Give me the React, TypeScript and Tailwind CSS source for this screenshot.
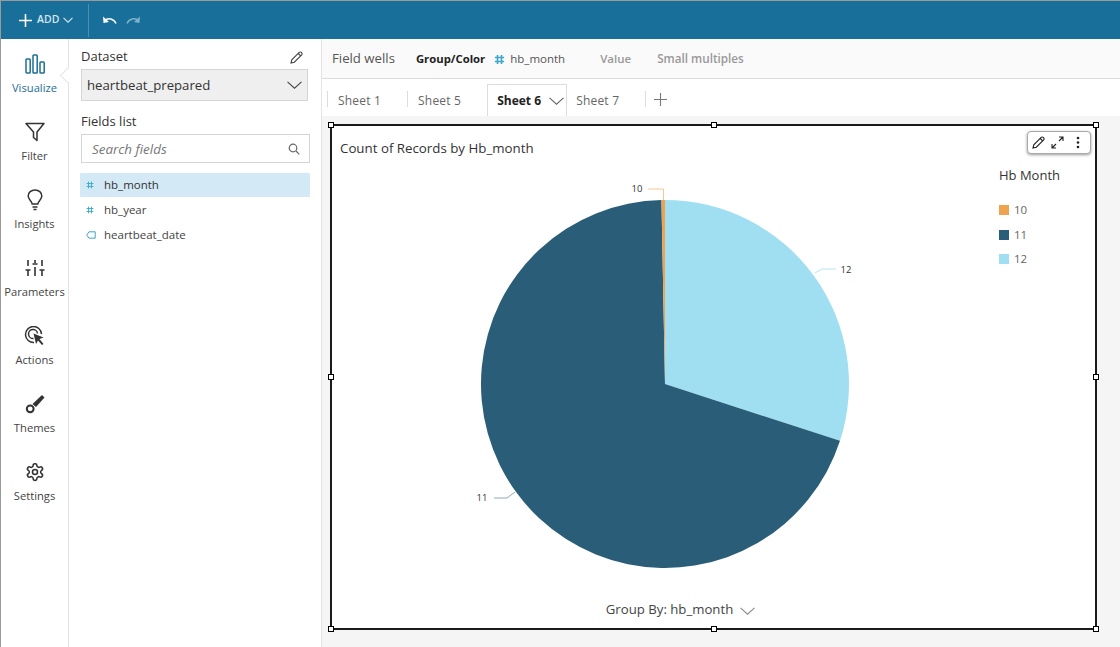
import React from "react";

const font = "font-['Open_Sans','Noto_Sans',sans-serif]";

function Chevron({ className = "", w = 14, h = 8, color = "#444" }: { className?: string; w?: number; h?: number; color?: string }) {
  return (
    <svg width={w} height={h} viewBox={`0 0 ${w} ${h}`} className={className} fill="none">
      <path d={`M0.5 0.8 L${w / 2} ${h - 0.8} L${w - 0.5} 0.8`} stroke={color} strokeWidth="1.1" />
    </svg>
  );
}

function Hash({ size = 10, color = "#3fa7c9", sw = 1.2 }: { size?: number; color?: string; sw?: number }) {
  return (
    <svg width={size} height={size} viewBox="0 0 10 10" fill="none" stroke={color} strokeWidth={sw}>
      <path d="M3.2 0.8 L3.2 9.2 M6.8 0.8 L6.8 9.2 M0.8 3.2 L9.2 3.2 M0.8 6.8 L9.2 6.8" />
    </svg>
  );
}

function RailItem({ label, active, icon }: { label: string; active?: boolean; icon: React.ReactNode }) {
  return (
    <div className="relative h-[68px] flex flex-col items-center">
      <div className="h-[28px] w-full flex items-center justify-center">{icon}</div>
      <div className={`mt-[3px] text-[11.2px] leading-[14px] whitespace-nowrap ${active ? "text-[#1c6f96]" : "text-[#444]"}`}>{label}</div>
    </div>
  );
}

function Handle({ className }: { className: string }) {
  return <div className={`absolute w-[6px] h-[6px] bg-white border border-black ${className}`} />;
}

function Tab({ label, sep = true, active }: { label: string; sep?: boolean; active?: boolean }) {
  if (active) {
    return (
      <div className="h-[32px] w-[80px] mt-[5px] flex items-center pl-[9px] bg-white border border-b-0 border-[#ddd] text-[12px] font-bold text-[#222] relative z-10">
        Sheet 6
        <Chevron className="ml-[8px]" w={15} h={8} color="#666" />
      </div>
    );
  }
  return (
    <div className="h-[37px] flex items-center pt-[7px]">
      {sep && <div className="w-px h-[16px] -mt-[4px] bg-[#ddd]" />}
      <div className={`${sep ? "pl-[10px]" : "pl-[9px]"} pr-[26px] text-[12px] text-[#666] tracking-[0.2px] whitespace-nowrap`}>{label}</div>
    </div>
  );
}

export default function App() {
  const cx = 333;
  const cy = 183;
  const r = 184;
  const pt = (deg: number) => {
    const a = ((deg - 90) * Math.PI) / 180;
    return `${(cx + r * Math.cos(a)).toFixed(2)} ${(cy + r * Math.sin(a)).toFixed(2)}`;
  };
  return (
    <div className={`w-[1120px] h-[647px] flex flex-col overflow-hidden bg-white border-l border-t border-[#9a9a9a] ${font}`}>
      <div className="h-[38px] shrink-0 bg-[#186f99] flex items-center pl-[17px] text-white">
        <svg width="15" height="15" viewBox="0 0 15 15" stroke="#fff" strokeWidth="1.6"><path d="M7.5 1 V14 M1 7.5 H14" /></svg>
        <span className="ml-[4px] text-[10.5px] font-semibold text-[#d5e6ee]">ADD</span>
        <Chevron className="ml-[4px]" w={10} h={6} color="#d5e6ee" />
        <div className="ml-[15px] w-px h-[33px] bg-[#4a8fb0]" />
        <svg className="ml-[13px]" width="15" height="10" viewBox="0 0 15 10" fill="none">
          <path d="M14 8.5 C12 3.5 6 2.5 2.5 5.5" stroke="#fff" strokeWidth="1.5" />
          <path d="M1 1.5 L1.5 8 L7 7 Z" fill="#fff" />
        </svg>
        <svg className="ml-[9px]" width="15" height="10" viewBox="0 0 15 10" fill="none">
          <path d="M1 8.5 C3 3.5 9 2.5 12.5 5.5" stroke="#7fb2cb" strokeWidth="1.5" />
          <path d="M14 1.5 L13.5 8 L8 7 Z" fill="#7fb2cb" />
        </svg>
      </div>

      <div className="flex-1 flex min-h-0">
        {/* Rail */}
        <div className="relative w-[68px] shrink-0 border-r border-[#e4e4e4] pt-[11px]">
          <div className="absolute left-[61px] top-[31px] w-[11px] h-[11px] rotate-45 bg-white border-l border-b border-[#e4e4e4] z-10" />
          <RailItem
            active
            label="Visualize"
            icon={
              <svg width="20" height="20" viewBox="0 0 20 20" fill="none" stroke="#1c6f96" strokeWidth="1.5">
                <rect x="1" y="5" width="4.2" height="14" rx="0.8" />
                <rect x="8" y="1" width="4.2" height="18" rx="0.8" />
                <rect x="15" y="8" width="4.2" height="11" rx="0.8" />
              </svg>
            }
          />
          <RailItem
            label="Filter"
            icon={
              <svg width="20" height="20" viewBox="0 0 20 20" fill="none" stroke="#333" strokeWidth="1.5" strokeLinejoin="round">
                <path d="M1 1.5 H19 L12 10 V18.5 L8.5 15.5 V10 Z" />
              </svg>
            }
          />
          <RailItem
            label="Insights"
            icon={
              <svg width="16" height="22" viewBox="0 0 16 22" fill="none" stroke="#333" strokeWidth="1.5">
                <path d="M5.2 15 C4.8 12 1.2 10.5 1.2 7 C1.2 3.5 4.2 1 8 1 C11.8 1 14.8 3.5 14.8 7 C14.8 10.5 11.2 12 10.8 15 Z" />
                <path d="M5.5 18 H10.5 M6.5 20.5 H9.5" />
              </svg>
            }
          />
          <RailItem
            label="Parameters"
            icon={
              <svg width="20" height="18" viewBox="0 0 20 18" fill="none" stroke="#333" strokeWidth="1.6">
                <path d="M3 1 V7 M3 11 V17 M0.5 11 H5.5 M10 1 V4 M10 8 V17 M7.5 5 H12.5 M17 1 V7 M17 11 V17 M14.5 11 H19.5" />
              </svg>
            }
          />
          <RailItem
            label="Actions"
            icon={
              <svg width="21" height="20" viewBox="0 0 21 20" fill="none" stroke="#333" strokeWidth="1.5">
                <path d="M10 16.5 A8 8 0 1 1 17.5 8" />
                <path d="M9.5 12.5 A4.5 4.5 0 1 1 13.5 7.5" />
                <path d="M9.5 7.5 L19.5 11.5 L15.5 13 L19.5 18 L18 19 L14 14.5 L12 18 Z" fill="#333" stroke="none" />
              </svg>
            }
          />
          <RailItem
            label="Themes"
            icon={
              <svg width="20" height="20" viewBox="0 0 20 20" fill="none">
                <path d="M7.5 10 L17 1 L19.5 3.5 L11 13 Z" fill="#333" />
                <circle cx="5.2" cy="14.8" r="3.4" stroke="#333" strokeWidth="2" />
              </svg>
            }
          />
          <RailItem
            label="Settings"
            icon={
              <svg width="20" height="20" viewBox="0 0 24 24" fill="none" stroke="#333" strokeWidth="1.9" strokeLinecap="round" strokeLinejoin="round">
                <path d="M12.22 2h-.44a2 2 0 0 0-2 2v.18a2 2 0 0 1-1 1.73l-.43.25a2 2 0 0 1-2 0l-.15-.08a2 2 0 0 0-2.73.73l-.22.38a2 2 0 0 0 .73 2.73l.15.1a2 2 0 0 1 1 1.72v.51a2 2 0 0 1-1 1.74l-.15.09a2 2 0 0 0-.73 2.73l.22.38a2 2 0 0 0 2.73.73l.15-.08a2 2 0 0 1 2 0l.43.25a2 2 0 0 1 1 1.73V20a2 2 0 0 0 2 2h.44a2 2 0 0 0 2-2v-.18a2 2 0 0 1 1-1.73l.43-.25a2 2 0 0 1 2 0l.15.08a2 2 0 0 0 2.73-.73l.22-.39a2 2 0 0 0-.73-2.73l-.15-.08a2 2 0 0 1-1-1.74v-.5a2 2 0 0 1 1-1.74l.15-.09a2 2 0 0 0 .73-2.73l-.22-.38a2 2 0 0 0-2.73-.73l-.15.08a2 2 0 0 1-2 0l-.43-.25a2 2 0 0 1-1-1.73V4a2 2 0 0 0-2-2z" />
                <circle cx="12" cy="12" r="3" />
              </svg>
            }
          />
        </div>

        {/* Fields panel */}
        <div className="w-[253px] shrink-0 border-r border-[#e4e4e4] pl-[12px] pr-[10px] pt-[9px]">
          <div className="flex items-center justify-between h-[18px] pr-[8px]">
            <span className="text-[13px] font-medium text-[#333]">Dataset</span>
            <svg width="13" height="13" viewBox="0 0 13 13" fill="none" stroke="#444" strokeWidth="1.1">
              <path d="M1 12 L1.8 8.8 L9.2 1.4 C9.8 0.8 10.6 0.8 11.2 1.4 L11.7 1.9 C12.2 2.5 12.2 3.2 11.7 3.8 L4.3 11.2 Z M8.2 2.4 L10.8 5" />
            </svg>
          </div>
          <div className="mt-[3px] h-[32px] w-[227px] bg-[#efefef] border border-[#d5d5d5] flex items-center justify-between pl-[5px] pr-[5px] text-[13.2px] leading-[18px] text-[#333]">
            <span className="-mt-px">heartbeat_prepared</span>
            <Chevron w={15} h={8} color="#444" />
          </div>
          <div className="mt-[12px] h-[18px] flex items-center text-[13px] font-medium text-[#333]">Fields list</div>
          <div className="mt-[3px] h-[29px] w-[229px] bg-white border border-[#d5d5d5] flex items-center justify-between pl-[10px] pr-[9px]">
            <span className="pt-[1px] text-[13.4px] italic text-[#777]">Search fields</span>
            <svg width="12" height="12" viewBox="0 0 12 12" fill="none" stroke="#666" strokeWidth="1.2">
              <circle cx="5" cy="5" r="3.8" />
              <path d="M8 8 L11.3 11.3" />
            </svg>
          </div>
          <div className="mt-[10px] w-[230px] -ml-px flex flex-col">
            <div className="h-[24px] bg-[#d3e9f5] rounded-[1px] flex items-center pl-[6px] text-[11.5px] text-[#333]">
              <Hash size={8} />
              <span className="ml-[10px]">hb_month</span>
            </div>
            <div className="h-[25px] flex items-center pl-[6px] text-[11.5px] text-[#444]">
              <Hash size={8} />
              <span className="ml-[10px]">hb_year</span>
            </div>
            <div className="h-[25px] flex items-center pl-[6px] text-[11.5px] text-[#444]">
              <svg width="10" height="8" viewBox="0 0 10 8" fill="none" stroke="#3fa7c9" strokeWidth="1">
                <path d="M3 0.8 H9.2 V7.2 H3 L0.7 4 Z" />
              </svg>
              <span className="ml-[8px]">heartbeat_date</span>
            </div>
          </div>
        </div>

        {/* Main */}
        <div className="flex-1 min-w-0 flex flex-col bg-[#f5f5f5]">
          <div className="h-[40px] shrink-0 bg-[#fafafa] border-b border-[#dcdcdc] flex items-center pt-[1px] pl-[10px] whitespace-nowrap">
            <span className="text-[13.2px] text-[#555]">Field wells</span>
            <span className="ml-[21px] text-[11.3px] font-bold text-[#222]">Group/Color</span>
            <span className="ml-[9px]"><Hash size={11} sw={1.5} /></span>
            <span className="ml-[5px] text-[11.5px] text-[#555]">hb_month</span>
            <span className="ml-[35px] text-[11.5px] font-semibold text-[#999]">Value</span>
            <span className="ml-[26px] text-[11.7px] font-semibold text-[#999]">Small multiples</span>
          </div>
          <div className="h-[37px] shrink-0 bg-white flex pl-[5px] items-start">
            <Tab label="Sheet 1" />
            <Tab label="Sheet 5" />
            <Tab label="Sheet 6" active />
            <Tab label="Sheet 7" sep={false} />
            <div className="h-[37px] flex items-center pt-[3px]">
              <div className="w-px h-[16px] bg-[#ddd]" />
              <svg className="ml-[8px]" width="13" height="13" viewBox="0 0 13 13" stroke="#777" strokeWidth="1.1"><path d="M6.5 0 V13 M0 6.5 H13" /></svg>
            </div>
          </div>
          <div className="flex-1 min-h-0 pl-[8px] pt-[8px] pr-[23px]">
            <div className="relative w-[767px] h-[506px] bg-white border-2 border-[#1a1a1a] flex flex-col">
              <Handle className="-left-[4px] -top-[4px]" />
              <Handle className="left-[379px] -top-[4px]" />
              <Handle className="-right-[4px] -top-[4px]" />
              <Handle className="-left-[4px] top-[248px]" />
              <Handle className="-right-[4px] top-[248px]" />
              <Handle className="-left-[4px] -bottom-[4px]" />
              <Handle className="left-[379px] -bottom-[4px]" />
              <Handle className="-right-[4px] -bottom-[4px]" />

              <div className="absolute right-[4px] top-[5px] w-[64px] h-[23px] bg-white border border-[#aaa] rounded-[4px] shadow-[0_1px_3px_rgba(0,0,0,0.4)] flex items-center pl-[4px] gap-[6px]">
                <svg width="13" height="13" viewBox="0 0 13 13" fill="none" stroke="#222" strokeWidth="1.1">
                  <path d="M1 12 L1.8 8.8 L9.2 1.4 C9.8 0.8 10.6 0.8 11.2 1.4 L11.7 1.9 C12.2 2.5 12.2 3.2 11.7 3.8 L4.3 11.2 Z M8.2 2.4 L10.8 5" />
                </svg>
                <svg width="13" height="13" viewBox="0 0 13 13" fill="none" stroke="#222" strokeWidth="1.1">
                  <path d="M1 12 L5 8 M8 5 L12 1 M8 1 H12 V5 M1 8 V12 H5" />
                </svg>
                <svg className="ml-[6px]" width="4" height="13" viewBox="0 0 4 13" fill="#222">
                  <circle cx="2" cy="2" r="1.3" /><circle cx="2" cy="6.5" r="1.3" /><circle cx="2" cy="11" r="1.3" />
                </svg>
              </div>

              <div className="h-[50px] shrink-0 pl-[8px] pt-[13px] text-[13.3px] leading-[18px] text-[#333]">Count of Records by Hb_month</div>
              <div className="flex-1 min-h-0 flex">
                <svg width="667" height="424" viewBox="0 0 667 424" className="shrink-0">
                  <g transform="translate(0,25)">
                    <path d={`M${cx} ${cy} L${pt(0)} A${r} ${r} 0 0 1 ${pt(108)} Z`} fill="#a0dff2" />
                    <path d={`M${cx} ${cy} L${pt(108)} A${r} ${r} 0 1 1 ${pt(358.9)} Z`} fill="#2a5d78" />
                    <path d={`M${cx} ${cy} L${pt(358.9)} A${r} ${r} 0 0 1 ${pt(360)} Z`} fill="#f0a34e" />
                    <path d="M316 -12 H331.5 V-1" fill="none" stroke="#f5c794" strokeWidth="1" />
                    <path d="M483 72 L490 68 H504" fill="none" stroke="#b9e5f3" strokeWidth="1" />
                    <path d="M162 297 H175 L183 291" fill="none" stroke="#8ea9b8" strokeWidth="1" />
                    <text x="305" y="-9" textAnchor="middle" fontSize="9.5" fill="#333">10</text>
                    <text x="514" y="72" textAnchor="middle" fontSize="9.5" fill="#333">12</text>
                    <text x="150" y="300" textAnchor="middle" fontSize="9.5" fill="#333">11</text>
                  </g>
                </svg>
                <div className="w-[95px] -mt-[10px] text-[#666]">
                  <div className="text-[13px] leading-[18px] text-[#333] whitespace-nowrap">Hb Month</div>
                  <div className="mt-[13px] flex flex-col text-[11.5px]">
                    <div className="h-[25px] flex items-center gap-[5px]"><span className="w-[10px] h-[10px] bg-[#f0a34e]" />10</div>
                    <div className="h-[25px] flex items-center gap-[5px]"><span className="w-[10px] h-[10px] bg-[#2a5d78]" />11</div>
                    <div className="h-[24px] flex items-center gap-[5px]"><span className="w-[10px] h-[10px] bg-[#a0dff2]" />12</div>
                  </div>
                </div>
              </div>
              <div className="h-[28px] shrink-0 flex items-start justify-center pr-[66px] text-[13.2px] text-[#444]">
                <span className="leading-[18px]">Group By: hb_month</span>
                <Chevron className="ml-[7px] mt-[7px]" w={15} h={8} color="#888" />
              </div>
            </div>
          </div>
        </div>
      </div>
    </div>
  );
}
